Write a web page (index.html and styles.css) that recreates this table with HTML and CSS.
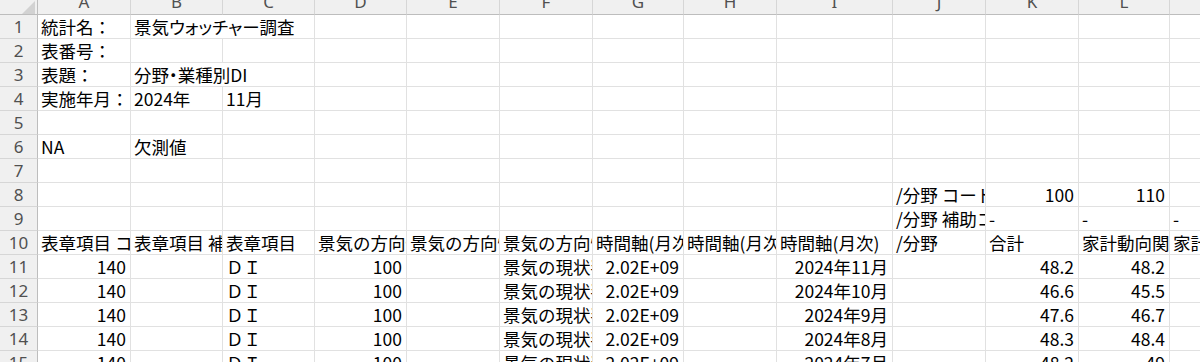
FILE: index.html
```html
<!DOCTYPE html>
<html lang="ja">
<head>
<meta charset="utf-8">
<title>Sheet</title>
<link rel="stylesheet" href="styles.css">
</head>
<body>
<div class="sheet">
  <div class="corner"><svg class="tri" width="38" height="15" viewBox="0 0 38 15"><polygon points="22,14 35,14 35,1" fill="#d2d2d2"/></svg></div>
  <div class="ch"><span>A</span></div><div class="ch"><span>B</span></div><div class="ch"><span>C</span></div><div class="ch"><span>D</span></div><div class="ch"><span>E</span></div><div class="ch"><span>F</span></div><div class="ch"><span>G</span></div><div class="ch"><span>H</span></div><div class="ch"><span>I</span></div><div class="ch"><span>J</span></div><div class="ch"><span>K</span></div><div class="ch"><span>L</span></div><div class="ch"><span>M</span></div>

  <div class="rh">1</div>
  <div class="c">統計名：</div><div class="c span2"><span class="palt">景気ウォッチャー調査</span></div><div class="c"></div><div class="c"></div><div class="c"></div><div class="c"></div><div class="c"></div><div class="c"></div><div class="c"></div><div class="c"></div><div class="c"></div><div class="c"></div>

  <div class="rh">2</div>
  <div class="c">表番号：</div><div class="c"></div><div class="c"></div><div class="c"></div><div class="c"></div><div class="c"></div><div class="c"></div><div class="c"></div><div class="c"></div><div class="c"></div><div class="c"></div><div class="c"></div><div class="c"></div>

  <div class="rh">3</div>
  <div class="c">表題：</div><div class="c span2"><span class="palt">分野・業種別DI</span></div><div class="c"></div><div class="c"></div><div class="c"></div><div class="c"></div><div class="c"></div><div class="c"></div><div class="c"></div><div class="c"></div><div class="c"></div><div class="c"></div>

  <div class="rh">4</div>
  <div class="c">実施年月：</div><div class="c">2024年</div><div class="c">11月</div><div class="c"></div><div class="c"></div><div class="c"></div><div class="c"></div><div class="c"></div><div class="c"></div><div class="c"></div><div class="c"></div><div class="c"></div><div class="c"></div>

  <div class="rh">5</div>
  <div class="c"></div><div class="c"></div><div class="c"></div><div class="c"></div><div class="c"></div><div class="c"></div><div class="c"></div><div class="c"></div><div class="c"></div><div class="c"></div><div class="c"></div><div class="c"></div><div class="c"></div>

  <div class="rh">6</div>
  <div class="c">NA</div><div class="c">欠測値</div><div class="c"></div><div class="c"></div><div class="c"></div><div class="c"></div><div class="c"></div><div class="c"></div><div class="c"></div><div class="c"></div><div class="c"></div><div class="c"></div><div class="c"></div>

  <div class="rh">7</div>
  <div class="c"></div><div class="c"></div><div class="c"></div><div class="c"></div><div class="c"></div><div class="c"></div><div class="c"></div><div class="c"></div><div class="c"></div><div class="c"></div><div class="c"></div><div class="c"></div><div class="c"></div>

  <div class="rh">8</div>
  <div class="c"></div><div class="c"></div><div class="c"></div><div class="c"></div><div class="c"></div><div class="c"></div><div class="c"></div><div class="c"></div><div class="c"></div><div class="c">/分野 コード</div><div class="c n">100</div><div class="c n">110</div><div class="c"></div>

  <div class="rh">9</div>
  <div class="c"></div><div class="c"></div><div class="c"></div><div class="c"></div><div class="c"></div><div class="c"></div><div class="c"></div><div class="c"></div><div class="c"></div><div class="c">/分野 補助コード</div><div class="c">-</div><div class="c">-</div><div class="c">-</div>

  <div class="rh">10</div>
  <div class="c">表章項目 コード</div><div class="c">表章項目 補助コード</div><div class="c">表章項目</div><div class="c">景気の方向性コード</div><div class="c">景気の方向性 補助コード</div><div class="c">景気の方向性</div><div class="c">時間軸(月次)コード</div><div class="c">時間軸(月次) 補助コード</div><div class="c">時間軸(月次)</div><div class="c">/分野</div><div class="c">合計</div><div class="c">家計動向関連</div><div class="c">家計動向関連 小売関連</div>

  <div class="rh">11</div>
  <div class="c n">140</div><div class="c"></div><div class="c">ＤＩ</div><div class="c n">100</div><div class="c"></div><div class="c">景気の現状判断</div><div class="c n">2.02E+09</div><div class="c"></div><div class="c n">2024年11月</div><div class="c"></div><div class="c n">48.2</div><div class="c n">48.2</div><div class="c"></div>

  <div class="rh">12</div>
  <div class="c n">140</div><div class="c"></div><div class="c">ＤＩ</div><div class="c n">100</div><div class="c"></div><div class="c">景気の現状判断</div><div class="c n">2.02E+09</div><div class="c"></div><div class="c n">2024年10月</div><div class="c"></div><div class="c n">46.6</div><div class="c n">45.5</div><div class="c"></div>

  <div class="rh">13</div>
  <div class="c n">140</div><div class="c"></div><div class="c">ＤＩ</div><div class="c n">100</div><div class="c"></div><div class="c">景気の現状判断</div><div class="c n">2.02E+09</div><div class="c"></div><div class="c n">2024年9月</div><div class="c"></div><div class="c n">47.6</div><div class="c n">46.7</div><div class="c"></div>

  <div class="rh">14</div>
  <div class="c n">140</div><div class="c"></div><div class="c">ＤＩ</div><div class="c n">100</div><div class="c"></div><div class="c">景気の現状判断</div><div class="c n">2.02E+09</div><div class="c"></div><div class="c n">2024年8月</div><div class="c"></div><div class="c n">48.3</div><div class="c n">48.4</div><div class="c"></div>

  <div class="rh">15</div>
  <div class="c n">140</div><div class="c"></div><div class="c">ＤＩ</div><div class="c n">100</div><div class="c"></div><div class="c">景気の現状判断</div><div class="c n">2.02E+09</div><div class="c"></div><div class="c n">2024年7月</div><div class="c"></div><div class="c n">48.2</div><div class="c n">49</div><div class="c"></div>
</div>
</body>
</html>
```

FILE: styles.css
```css
html, body {
  margin: 0;
  padding: 0;
  background: #ffffff;
  overflow: hidden;
}

.sheet {
  display: grid;
  grid-template-columns: 38px 93px 92px 92px 92px 93px 93px 91px 93px 116px 93px 93px 91px 93px;
  grid-template-rows: 15px repeat(15, 24px);
  width: 1263px;
  font-family: "Noto Sans CJK JP", sans-serif;
  font-size: 17.5px;
  color: #000000;
}

.corner {
  background: #f0f0f0;
  border-right: 1px solid #bdbdbd;
  border-bottom: 1px solid #bdbdbd;
  box-sizing: border-box;
  overflow: hidden;
}

.tri {
  display: block;
}

.ch {
  background: #f0f0f0;
  border-right: 1px solid #d6d6d6;
  border-bottom: 1px solid #bdbdbd;
  box-sizing: border-box;
  overflow: hidden;
  text-align: center;
  font-family: "Noto Sans", sans-serif;
  font-size: 17px;
  color: #505050;
}

.ch span {
  display: block;
  line-height: 15px;
  margin-top: -6px;
}

.rh {
  background: #f0f0f0;
  border-right: 1px solid #bdbdbd;
  border-bottom: 1px solid #d6d6d6;
  box-sizing: border-box;
  text-align: center;
  font-family: "Noto Sans", sans-serif;
  font-size: 17px;
  line-height: 24px;
  color: #505050;
  overflow: hidden;
}

.c {
  border-right: 1px solid #e1e1e1;
  border-bottom: 1px solid #e1e1e1;
  box-sizing: border-box;
  overflow: hidden;
  white-space: nowrap;
  padding: 0 4px 0 3px;
  line-height: 24px;
}

.span2 {
  grid-column: span 2;
}

.n {
  text-align: right;
}

.palt {
  font-feature-settings: "palt" 1;
}
```
